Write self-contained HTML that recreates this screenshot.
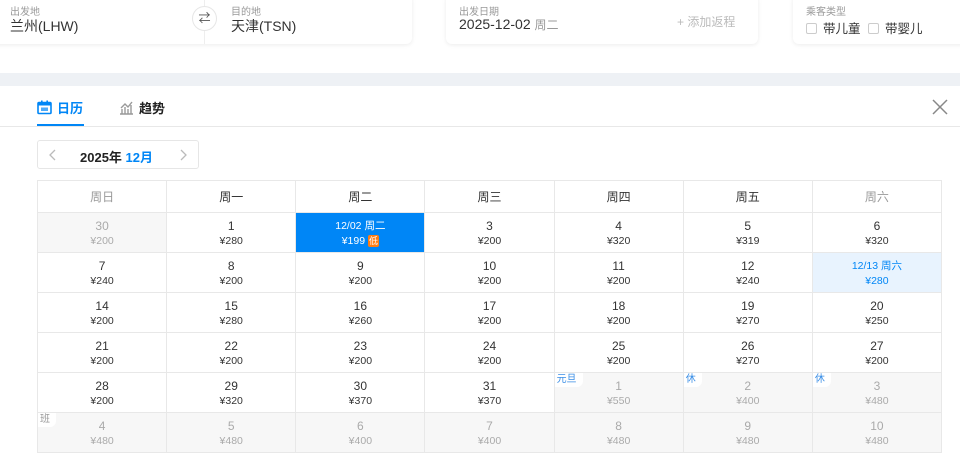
<!DOCTYPE html>
<html><head><meta charset="utf-8"><style>
*{margin:0;padding:0;box-sizing:border-box}
body{width:960px;height:476px;overflow:hidden;background:#fff;font-family:"Liberation Sans","Noto Sans CJK SC",sans-serif;color:#333;position:relative}
.card{position:absolute;top:-6px;height:50px;background:#fff;border-radius:6px;box-shadow:0 1px 4px rgba(0,0,0,.08)}
.lbl{position:absolute;font-size:10px;color:#999;top:9px}
.val{position:absolute;font-size:14px;color:#333;top:22px}
.band{position:absolute;left:0;top:73px;width:960px;height:13px;background:#eef1f5}
table{position:absolute;left:37px;top:180px;border-collapse:collapse;width:905px;table-layout:fixed}
td,th{border:1px solid #e8e8e8;text-align:center;font-weight:normal;position:relative}
th{height:32px;font-size:12px;color:#333}
th.we{color:#999}
td{height:40px;background:#fff;vertical-align:top;padding-top:6px}
td .d{font-size:12px;line-height:15px;color:#333}
td .p{font-size:10.5px;line-height:15px;color:#333}
td.g{background:#f7f7f7}td.g .d,td.g .p{color:#aaa}
td.sel{background:#0086f6}td.sel .d,td.sel .p{color:#fff;font-size:10.5px}
td.hl{background:#e8f3fe}td.hl .d,td.hl .p{color:#0086f6;font-size:10.5px}
.tag{position:absolute;left:0;top:0;background:#fff;color:#3a8ee6;font-size:10px;padding:0 6px 1px 2px;border-bottom-right-radius:6px;line-height:13px}
.tag.b{color:#999}
.low{display:inline-block;background:#ff7d13;color:#fff;font-size:9px;padding:0 1px;border-radius:2px;line-height:12px}
</style></head><body>
<div class="card" style="left:-10px;width:422px">
<div class="lbl" style="left:20px;top:9px">出发地</div><div class="val" style="left:20px">兰州(LHW)</div>
<div style="position:absolute;left:214px;top:6px;width:1px;height:44px;background:#eee"></div>
<div style="position:absolute;left:202px;top:12px;width:25px;height:25px;border-radius:50%;border:1px solid #e6e6e6;background:#fff;font-size:12px;text-align:center;line-height:23px;color:#555">⇄</div>
<div class="lbl" style="left:241px">目的地</div><div class="val" style="left:241px">天津(TSN)</div>
</div>
<div class="card" style="left:446px;width:312px">
<div class="lbl" style="left:13px">出发日期</div><div class="val" style="left:13px">2025-12-02 <span style="color:#999;font-size:12px">周二</span></div>
<div style="position:absolute;left:231px;top:19px;font-size:12px;color:#bbb">+ 添加返程</div>
</div>
<div class="card" style="left:793px;width:180px">
<div class="lbl" style="left:13px">乘客类型</div>
<div class="val" style="left:13px;font-size:12.5px;top:24px"><span style="display:inline-block;width:11px;height:11px;border:1px solid #ccc;border-radius:2px;vertical-align:-1px;margin-right:6px"></span>带儿童 <span style="display:inline-block;width:11px;height:11px;border:1px solid #ccc;border-radius:2px;vertical-align:-1px;margin:0 6px 0 4px"></span>带婴儿</div>
</div>
<div class="band"></div>
<div style="position:absolute;left:37px;top:98px;font-size:13px;font-weight:bold;color:#0086f6">
<svg width="15" height="15" viewBox="0 0 15 15" style="vertical-align:-2px;margin-right:5px"><rect x="1" y="2.5" width="13" height="11" rx="1" fill="none" stroke="#0086f6" stroke-width="1.6"/><rect x="1" y="2.5" width="13" height="3" fill="#0086f6"/><rect x="4" y="0.5" width="1.6" height="3" fill="#0086f6"/><rect x="9.4" y="0.5" width="1.6" height="3" fill="#0086f6"/><rect x="4" y="7.5" width="7" height="3.5" fill="#0086f6" opacity=".7"/></svg>日历</div>
<div style="position:absolute;left:37px;top:124px;width:47px;height:2px;background:#0086f6"></div>
<div style="position:absolute;left:119px;top:98px;font-size:13px;font-weight:bold;color:#222">
<svg width="15" height="15" viewBox="0 0 15 15" style="vertical-align:-2px;margin-right:5px"><path d="M1 14h13M3 14V9M6 14V7M9 14V9M12 14V5M2 8l4-4 3 3 4-5" fill="none" stroke="#999" stroke-width="1.4"/></svg>趋势</div>
<svg style="position:absolute;left:931px;top:98px" width="18" height="18" viewBox="0 0 18 18"><path d="M2 2L16 16M16 2L2 16" stroke="#888" stroke-width="1.5"/></svg>
<div style="position:absolute;left:0;top:126px;width:960px;height:1px;background:#e8e8e8"></div>
<div style="position:absolute;left:37px;top:140px;width:162px;height:29px;border:1px solid #e6e6e6;border-radius:3px">
<svg style="position:absolute;left:11px;top:8px" width="8" height="12" viewBox="0 0 8 12"><path d="M6 1L1 6l5 5" fill="none" stroke="#bbb" stroke-width="1.3"/></svg>
<span style="position:absolute;left:42px;top:6px;font-size:13px;font-weight:bold;color:#222">2025年 <span style="color:#0086f6">12月</span></span>
<svg style="position:absolute;left:141px;top:8px" width="8" height="12" viewBox="0 0 8 12"><path d="M2 1l5 5-5 5" fill="none" stroke="#bbb" stroke-width="1.3"/></svg>
</div>
<table>
<tr><th class="we">周日</th><th>周一</th><th>周二</th><th>周三</th><th>周四</th><th>周五</th><th class="we">周六</th></tr>
<tr><td class="g"><div class="d">30</div><div class="p">¥200</div></td><td><div class="d">1</div><div class="p">¥280</div></td><td class="sel"><div class="d">12/02 周二</div><div class="p">¥199 <span class="low">低</span></div></td><td><div class="d">3</div><div class="p">¥200</div></td><td><div class="d">4</div><div class="p">¥320</div></td><td><div class="d">5</div><div class="p">¥319</div></td><td><div class="d">6</div><div class="p">¥320</div></td></tr>
<tr><td><div class="d">7</div><div class="p">¥240</div></td><td><div class="d">8</div><div class="p">¥200</div></td><td><div class="d">9</div><div class="p">¥200</div></td><td><div class="d">10</div><div class="p">¥200</div></td><td><div class="d">11</div><div class="p">¥200</div></td><td><div class="d">12</div><div class="p">¥240</div></td><td class="hl"><div class="d">12/13 周六</div><div class="p">¥280</div></td></tr>
<tr><td><div class="d">14</div><div class="p">¥200</div></td><td><div class="d">15</div><div class="p">¥280</div></td><td><div class="d">16</div><div class="p">¥260</div></td><td><div class="d">17</div><div class="p">¥200</div></td><td><div class="d">18</div><div class="p">¥200</div></td><td><div class="d">19</div><div class="p">¥270</div></td><td><div class="d">20</div><div class="p">¥250</div></td></tr>
<tr><td><div class="d">21</div><div class="p">¥200</div></td><td><div class="d">22</div><div class="p">¥200</div></td><td><div class="d">23</div><div class="p">¥200</div></td><td><div class="d">24</div><div class="p">¥200</div></td><td><div class="d">25</div><div class="p">¥200</div></td><td><div class="d">26</div><div class="p">¥270</div></td><td><div class="d">27</div><div class="p">¥200</div></td></tr>
<tr><td><div class="d">28</div><div class="p">¥200</div></td><td><div class="d">29</div><div class="p">¥320</div></td><td><div class="d">30</div><div class="p">¥370</div></td><td><div class="d">31</div><div class="p">¥370</div></td><td class="g"><span class="tag">元旦</span><div class="d">1</div><div class="p">¥550</div></td><td class="g"><span class="tag">休</span><div class="d">2</div><div class="p">¥400</div></td><td class="g"><span class="tag">休</span><div class="d">3</div><div class="p">¥480</div></td></tr>
<tr><td class="g"><span class="tag b">班</span><div class="d">4</div><div class="p">¥480</div></td><td class="g"><div class="d">5</div><div class="p">¥480</div></td><td class="g"><div class="d">6</div><div class="p">¥400</div></td><td class="g"><div class="d">7</div><div class="p">¥400</div></td><td class="g"><div class="d">8</div><div class="p">¥480</div></td><td class="g"><div class="d">9</div><div class="p">¥480</div></td><td class="g"><div class="d">10</div><div class="p">¥480</div></td></tr>
</table>
</body></html>
